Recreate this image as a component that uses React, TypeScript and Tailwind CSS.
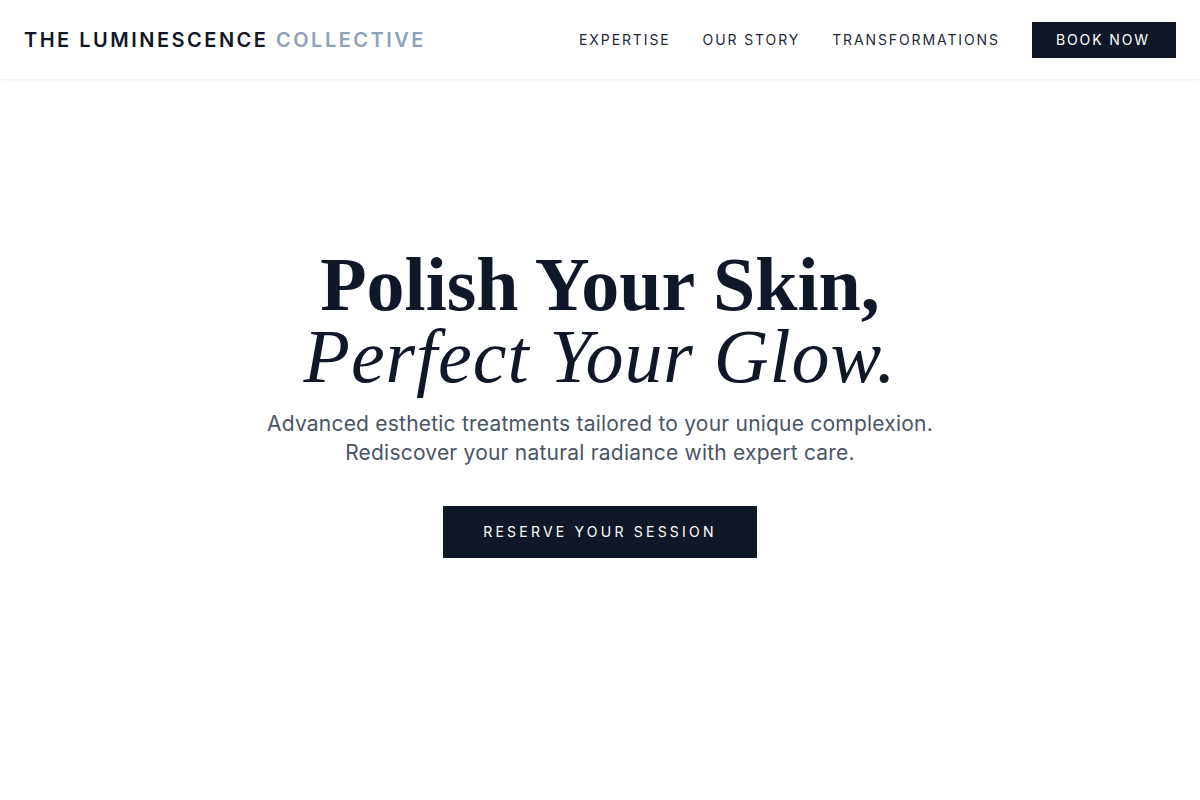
import React from "react";

const sans = "font-['Inter','Noto_Sans',sans-serif]";
const serif = "font-['Liberation_Serif','DejaVu_Serif',serif]";

export default function App() {
  return (
    <div className={`min-h-screen bg-white ${sans} text-gray-900`}>
      <header className="h-20 flex items-center justify-between px-6 border-b border-gray-100 shadow-[0_1px_3px_rgba(0,0,0,0.03)]">
        <div className="text-[20px] font-semibold tracking-[0.125em] text-gray-900 leading-none">
          THE LUMINESCENCE <span className="text-slate-400">COLLECTIVE</span>
        </div>
        <nav className="flex items-center gap-8">
          <a className="text-[14px] tracking-[0.135em] text-gray-800">EXPERTISE</a>
          <a className="text-[14px] tracking-[0.135em] text-gray-800">OUR STORY</a>
          <a className="text-[14px] tracking-[0.135em] text-gray-800">TRANSFORMATIONS</a>
          <button className="bg-gray-900 text-white text-[14px] tracking-[0.135em] pl-6 pr-[26px] h-9">BOOK NOW</button>
        </nav>
      </header>
      <main className="flex flex-col items-center text-center pt-[168px]">
        <h1 className={`${serif} text-[76px] leading-[72px] text-gray-900`}>
          <span className="block font-bold">Polish Your Skin,</span>
          <span className="block italic tracking-[0.012em]">Perfect Your Glow.</span>
        </h1>
        <p className="mt-[17px] text-[21px] leading-[29px] tracking-[0.01em] text-gray-600">
          Advanced esthetic treatments tailored to your unique complexion.
          <br />
          Rediscover your natural radiance with expert care.
        </p>
        <button className="mt-[39px] bg-gray-900 text-white text-[14px] leading-5 tracking-[0.23em] px-10 py-4">
          RESERVE YOUR SESSION
        </button>
      </main>
    </div>
  );
}
